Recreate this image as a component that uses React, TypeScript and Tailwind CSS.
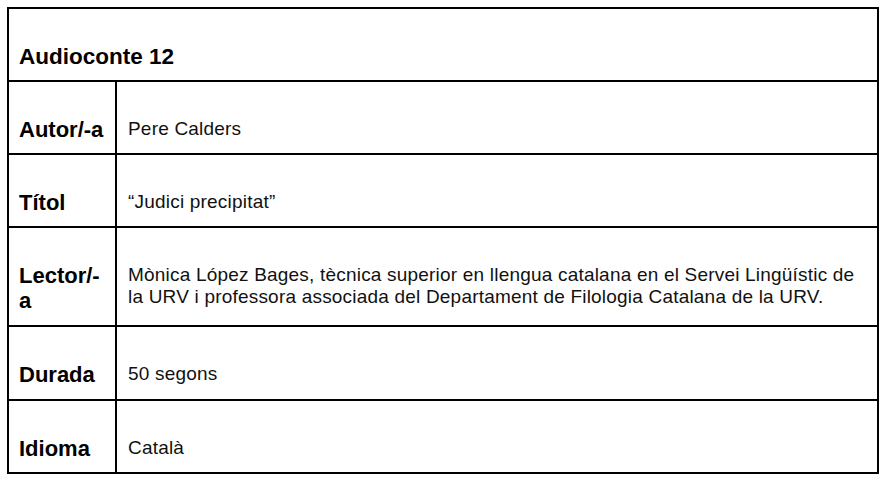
const rows = [
  { label: "Autor/-a", value: "Pere Calders", h: "h-[73px]" },
  { label: "Títol", value: "“Judici precipitat”", h: "h-[73px]" },
  {
    label: "Lector/-a",
    value:
      "Mònica López Bages, tècnica superior en llengua catalana en el Servei Lingüístic de la URV i professora associada del Departament de Filologia Catalana de la URV.",
    h: "h-[99px]",
  },
  { label: "Durada", value: "50 segons", h: "h-[74px]" },
  { label: "Idioma", value: "Català", h: "h-[73px]" },
]

export default function App() {
  return (
    <div
      className="min-h-screen bg-white pt-[7px] pl-[7px]"
      style={{ fontFamily: '"Liberation Sans", Arial, sans-serif' }}
    >
      <div className="w-[872px] border-2 border-black">

        <div className="h-[71px] pt-[35px] pl-[10px] text-[22.5px] leading-[25px] font-bold text-black">
          Audioconte 12
        </div>

        {rows.map((row) => (
          <div key={row.label} className={`flex border-t-2 border-black ${row.h}`}>
            <div className="w-[108px] shrink-0 border-r-2 border-black pt-[35px] pl-[10px] pr-[6px] text-[22px] leading-[25px] font-bold text-black">
              {row.label}
            </div>
            <div className="flex-1 pt-[36px] pl-[11px] pr-[16px] text-[19px] leading-[22px] tracking-[0.2px] text-[#111]">
              {row.value}
            </div>
          </div>
        ))}

      </div>
    </div>
  )
}
